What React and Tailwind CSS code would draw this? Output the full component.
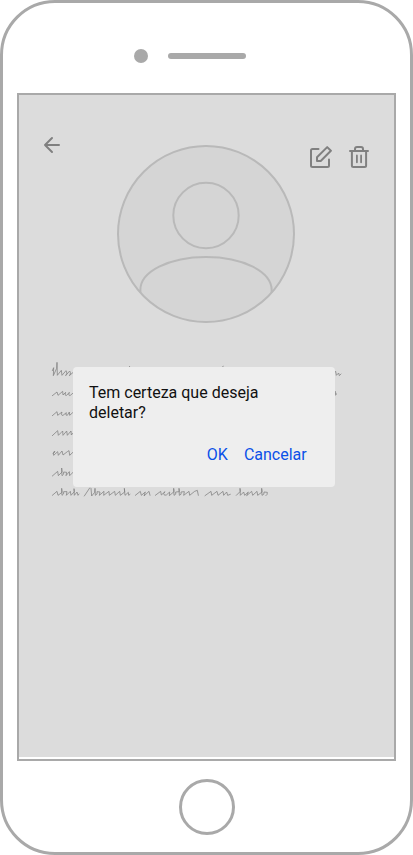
function Avatar() {
  return (
    <svg className="h-[178px] w-[178px]" viewBox="0 0 178 178" fill="#d5d5d5" stroke="#b9b9b9" strokeWidth="2">
      <circle cx="89" cy="89" r="88" />
      <circle cx="89" cy="70.5" r="32.7" />
      <path d="M23.500 147.500C21 126 54 112 89 112S157 126 154.500 147.500" fill="none" />
    </svg>
  );
}

function BackIcon() {
  return (
    <svg className="h-6 w-6" viewBox="0 0 24 24" fill="none" stroke="#808080" strokeWidth="2" strokeLinecap="round" strokeLinejoin="round">
      <path d="M19 12H5M12 5l-7 7 7 7" />
    </svg>
  );
}

function EditIcon() {
  return (
    <svg className="h-6 w-6" viewBox="0 0 24 24" fill="none" stroke="#808080" strokeWidth="2" strokeLinecap="round" strokeLinejoin="round">
      <path d="M10.500 4H4.500Q3 4 3 5.500V20.500Q3 22 4.500 22H19.500Q21 22 21 20.500V14.500" />
      <path d="M9 16V12.300L19.200 2.100L22.900 5.800L12.700 16Z" />
    </svg>
  );
}

function TrashIcon() {
  return (
    <svg className="h-6 w-6" viewBox="0 0 24 24" fill="none" stroke="#808080" strokeWidth="2" strokeLinecap="round" strokeLinejoin="round">
      <path d="M3 6H21M4.900 6V20.500Q4.900 22 6.400 22H17.600Q19.100 22 19.100 20.500V6M8 6V4Q8 2 10 2H14Q16 2 16 4V6" />
      <path d="M9.900 10.500V17.300M14.100 10.500V17.300" strokeWidth="1.800" />
    </svg>
  );
}

function Scribble() {
  return (
    <svg className="h-[140px] w-[292px]" viewBox="0 0 876 420" fill="none" stroke="#808080" strokeWidth="2.300" strokeLinecap="round" strokeLinejoin="round">
      <g transform="translate(-30 -15)">
        <path d="M37 47L41 38L40 62L50 40L51 22L52 61L64 46L66 61L78 47Q81 49 80 56L77 62L89 48Q92 51 91 57L88 62L103 49" />
        <path d="M37 122L51 111L54 121L68 109L69 120L77 112Q73 124 80 121L88 112Q84 124 91 121L102 112" />
        <path d="M37 182L51 170L53 181L66 171Q62 183 69 181L79 173Q75 183 82 181L88 171L89 181L98 173L102 171" />
      </g>
      <g transform="translate(-30 195)">
        <path d="M37 32L53 17L55 31L64 22L68 18L69 31L80 18L82 31L93 18L94 30L103 20" />
        <path d="M40 86Q47 80 44 78Q36 84 41 91L53 80L55 91L66 78L69 90L82 80L87 77L89 91L103 78" />
        <path d="M37 153L53 139L55 152L66 141L65 129L66 152Q73 149 71 141L80 142L78 152L88 140L89 152L102 139" />
        <path d="M37 211L51 199L54 211L66 202L65 190L66 211Q73 208 71 200L81 200L79 211L91 199L93 211L103 200L102 191L103 211L111 201L114 211L117 207" />
        <path d="M133 213L149 189M153 190L155 213L164 202L165 190L166 211Q174 208 171 200L180 201L178 211L192 199L191 211L207 199L208 211L224 199L226 211L239 199L241 211L254 201L253 190L255 211L265 202L266 211L270 208" />
        <path d="M286 211L301 199L304 211L316 201L312 213L327 199L330 211" />
      </g>
      <g transform="translate(180 360)">
        <path d="M136 46L152 34L154 45L165 35L161 41Q162 48 169 45L179 36L178 47L192 35L191 25L192 46Q200 44 197 36L208 35L207 25L208 46Q216 44 213 36L223 35L221 46L237 34L239 46L254 34L262 31L265 46" />
        <path d="M285 47L303 34L305 46L321 34L324 46L339 34L341 46L350 36L353 46L361 43" />
        <path d="M379 46L391 34L390 25L391 46L401 36L404 46L415 36L410 47L425 34L428 46L441 34L443 46L456 36L455 25L456 46Q464 44 462 36L472 37Q473 44 468 47" />
      </g>
      <g transform="translate(210 -15)">
        <path d="M27 37l2-3M307 36l3-2M637 61L647 49L649 61L656 54L658 62L663 57M637 118L646 109L646 121Q651 119 648 114" />
      </g>
    </svg>
  );
}

function Dialog() {
  return (
    <div className="absolute left-[54px] top-[272px] flex h-[120px] w-[262px] flex-col justify-between rounded bg-[#eeeeee] px-4 pb-[22px] pt-4 text-base leading-5">
      <p className="w-[200px] text-[#111111]">Tem certeza que deseja deletar?</p>
      <div className="flex justify-end gap-4 pr-[12.3px] text-[#0b50e8]">
        <button>OK</button>
        <button>Cancelar</button>
      </div>
    </div>
  );
}

export default function App() {
  return (
    <div className="flex h-[855px] w-[413px] flex-col items-center rounded-[55px] border-[3px] border-[#a9a9a9] bg-white font-['Roboto',sans-serif]">
      <div className="flex h-[90px] w-full items-center pl-[131px] pt-4">
        <div className="h-3.5 w-3.5 rounded-full bg-[#a9a9a9]" />
        <div className="ml-5 h-1.5 w-[78px] rounded-full bg-[#a9a9a9]" />
      </div>
      <main className="relative h-[668px] w-[379px] shrink-0 border-2 border-[#a9a9a9] bg-white">
        <div className="h-[662px] bg-[#dcdcdc]">
          <div className="flex pl-[21px] pt-[38px]">
            <BackIcon />
            <div className="ml-[53px] pt-3">
              <Avatar />
            </div>
            <div className="ml-[13px] flex gap-[15px] pt-3">
              <EditIcon />
              <TrashIcon />
            </div>
          </div>
          <div className="pl-[31px] pt-[37px]">
            <Scribble />
          </div>
        </div>
        <Dialog />
      </main>
      <div className="mt-[18px] h-14 w-14 shrink-0 rounded-full border-[3px] border-[#a9a9a9]" />
    </div>
  );
}
